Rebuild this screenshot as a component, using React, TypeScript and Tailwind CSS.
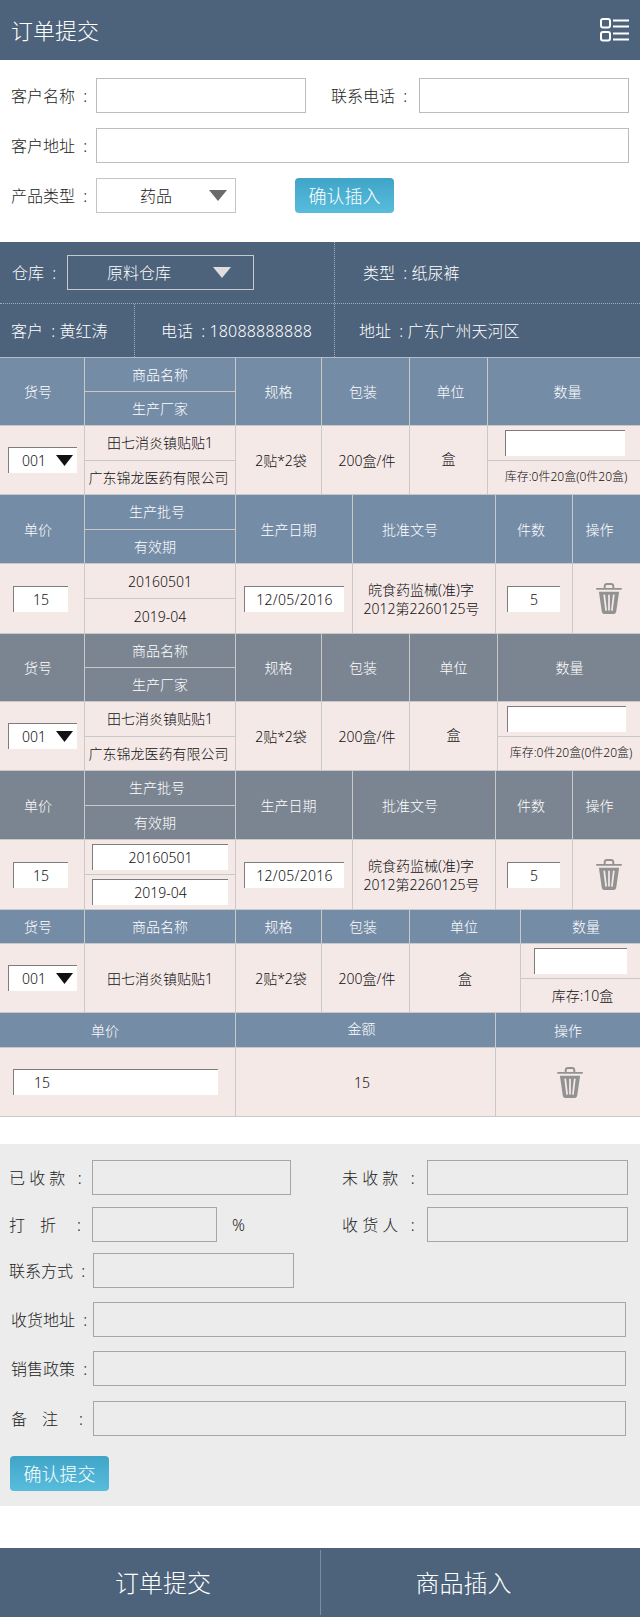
import React from "react";

function Tri({ color, w = 18, h = 11 }: { color: string; w?: number; h?: number }) {
  return (
    <svg width={w} height={h} viewBox="0 0 18 11" preserveAspectRatio="none" className="shrink-0">
      <polygon points="0,0 18,0 9,11" fill={color} />
    </svg>
  );
}

function MenuIcon() {
  return (
    <svg width="29" height="24" viewBox="0 0 29 24" fill="none" stroke="#fff" strokeWidth="2" className="shrink-0">
      <rect x="1" y="1" width="9" height="8.5" rx="2" />
      <rect x="1" y="14" width="9" height="8.5" rx="2" />
      <path d="M13 2.5H29M13 8.5H29M13 15.5H29M13 21.5H29" />
    </svg>
  );
}

function Trash() {
  return (
    <svg width="26" height="31" viewBox="0 0 27 32" className="shrink-0">
      <path d="M9 6V3.5C9 2 10 1 11.5 1H15.5C17 1 18 2 18 3.5V6" fill="none" stroke="#929292" strokeWidth="2" />
      <rect x="0" y="5" width="27" height="2" rx="1" fill="#929292" />
      <path d="M3 9H24L21 29.5C20.8 31 19.8 32 18.5 32H8.5C7.2 32 6.2 31 6 29.5Z" fill="#929292" />
      <path d="M8.5 12L10.5 28.5M13.5 12V28.5M18.5 12L16.5 28.5" stroke="#f5e9e8" strokeWidth="1.8" fill="none" />
    </svg>
  );
}

function Inset({ className = "", value = "", align = "text-center" }: { className?: string; value?: string; align?: string }) {
  return (
    <input
      readOnly
      value={value}
      className={`h-[26px] bg-white border-t border-l border-[#7d7d7d] outline-none text-[14px] text-[#111] ${align} ${className}`}
    />
  );
}

function Sel() {
  return (
    <div className="w-[69px] h-[26px] bg-white border-t border-l border-[#7d7d7d] flex items-center pl-[13px] text-[14px] text-[#111]">
      <span className="w-[34px]">001</span>
      <Tri color="#111" w={17} h={11} />
    </div>
  );
}

function Cell({ children, className = "" }: { children?: React.ReactNode; className?: string }) {
  return <div className={`flex items-center justify-center border-r border-[#c9c9c9] last:border-r-0 whitespace-nowrap ${className}`}>{children}</div>;
}

function Stack({ top, bottom, className = "" }: { top: React.ReactNode; bottom: React.ReactNode; className?: string }) {
  return (
    <div className={`flex flex-col border-r border-[#c9c9c9] last:border-r-0 whitespace-nowrap ${className}`}>
      <div className="flex-1 flex items-center justify-center border-b border-[#c9c9c9]">{top}</div>
      <div className="flex-1 flex items-center justify-center">{bottom}</div>
    </div>
  );
}

const headCommon = "text-white text-[14px] border-b border-[#c9c9c9]";
const bodyCommon = "bg-[#f5e9e8] text-[#111] text-[14px] border-b border-[#c9c9c9]";

function Approval() {
  return (
    <Cell className="flex-col leading-[19px] pr-[6px]">
      <span>皖食药监械(准)字</span>
      <span className="pl-[1px]">2012第2260125号</span>
    </Cell>
  );
}

function ProductGroup({ head, qtyCols, editableBatch, unitPad, countPad, qtyInput }: { head: string; qtyCols: string; editableBatch?: boolean; unitPad: string; countPad: string; qtyInput: string }) {
  return (
    <>
      <div className={`grid ${qtyCols} h-[68px] ${head} ${headCommon}`}>
        <Cell className="pr-[8px]">货号</Cell>
        <Stack top="商品名称" bottom="生产厂家" />
        <Cell>规格</Cell>
        <Cell className="pr-[5px]">包装</Cell>
        <Cell className={unitPad}>单位</Cell>
        <Cell className={countPad}>数量</Cell>
      </div>
      <div className={`grid ${qtyCols} h-[69px] ${bodyCommon}`}>
        <Cell className="justify-start pl-[8px]"><Sel /></Cell>
        <Stack top="田七消炎镇贴贴1" bottom={<span className="pr-[3px]">广东锦龙医药有限公司</span>} />
        <Cell className="pl-[5px]">2贴*2袋</Cell>
        <Cell className="pl-[3px]">200盒/件</Cell>
        <Cell><span className="pb-[3px]">盒</span></Cell>
        <Stack
          top={<Inset className={qtyInput} />}
          bottom={<span className="text-[12px] pl-[4px]">库存:0件20盒(0件20盒)</span>}
        />
      </div>
      <div className={`grid grid-cols-[85px_151px_117px_143px_77px_1fr] h-[69px] ${head} ${headCommon}`}>
        <Cell className="pr-[8px]">单价</Cell>
        <Stack top={<span className="pr-[6px]">生产批号</span>} bottom={<span className="pr-[10px]">有效期</span>} />
        <Cell className="pr-[11px]">生产日期</Cell>
        <Cell className="pr-[28px]">批准文号</Cell>
        <Cell className="pr-[6px]">件数</Cell>
        <Cell className="pr-[14px]">操作</Cell>
      </div>
      <div className={`grid grid-cols-[85px_151px_117px_143px_77px_1fr] h-[70px] ${bodyCommon}`}>
        <Cell className="justify-start pl-[13px]"><Inset value="15" className="w-[55px]" /></Cell>
        {editableBatch ? (
          <Stack
            top={<Inset value="20160501" className="w-[136px]" />}
            bottom={<Inset value="2019-04" className="w-[136px]" />}
          />
        ) : (
          <Stack top="20160501" bottom="2019-04" />
        )}
        <Cell className="justify-start pl-[8px]"><Inset value="12/05/2016" className="w-[100px] tracking-[0.3px]" /></Cell>
        <Approval />
        <Cell className="justify-start pl-[11px]"><Inset value="5" className="w-[53px]" /></Cell>
        <Cell className="pl-[5px]"><Trash /></Cell>
      </div>
    </>
  );
}

function FormInput({ className = "" }: { className?: string }) {
  return <input readOnly className={`h-[35px] border border-[#a6a6a6] bg-transparent outline-none shrink-0 ${className}`} />;
}

function TopInput({ className = "" }: { className?: string }) {
  return <input readOnly className={`h-[35px] border border-[#bcbcbc] bg-white outline-none shrink-0 ${className}`} />;
}

function BlueButton({ label, className = "" }: { label: string; className?: string }) {
  return (
    <button className={`w-[99px] h-[35px] rounded-[4px] bg-gradient-to-b from-[#3fa4c6] to-[#58bddd] text-white text-[18px] leading-none shrink-0 ${className}`}>
      {label}
    </button>
  );
}

function SpacedLabel({ a, b, className = "" }: { a: string; b: string; className?: string }) {
  return (
    <span className={`flex items-center ${className}`}>
      <span className="w-[31px]">{a}</span>
      <span className="w-[37px]">{b}</span>
      <span>:</span>
    </span>
  );
}

export default function App() {
  return (
    <div className="w-[640px] h-[1617px] bg-white flex flex-col whitespace-pre font-['Noto_Sans','Noto_Sans_CJK_SC',sans-serif] font-light">
      <header className="h-[60px] bg-[#4d627b] flex items-center justify-between pl-[11px] pr-[11px] text-white text-[22px] shrink-0">
        <span>订单提交</span>
        <MenuIcon />
      </header>

      <section className="h-[182px] pt-[18px] px-[11px] flex flex-col gap-[15px] text-[16px] text-[#222] shrink-0">
        <div className="flex items-center">
          <span className="w-[85px]">客户名称  :</span>
          <TopInput className="w-[210px]" />
          <span className="ml-[25px] w-[88px]">联系电话  :</span>
          <TopInput className="w-[210px]" />
        </div>
        <div className="flex items-center">
          <span className="w-[85px]">客户地址  :</span>
          <TopInput className="w-[533px]" />
        </div>
        <div className="flex items-center">
          <span className="w-[85px]">产品类型  :</span>
          <div className="w-[140px] h-[35px] border border-[#c4c4c4] flex items-center pl-[43px] pr-[8px] justify-between shrink-0">
            <span>药品</span>
            <Tri color="#6a6a6a" />
          </div>
          <BlueButton label="确认插入" className="ml-[59px]" />
        </div>
      </section>

      <section className="bg-[#4d627b] text-white text-[16px] shrink-0">
        <div className="flex h-[62px] border-b border-dotted border-[#9fadbd]">
          <div className="w-[335px] flex items-center pl-[12px] border-r border-dotted border-[#9fadbd]">
            <span className="w-[55px]">仓库  :</span>
            <div className="w-[187px] h-[35px] border border-[#c4c9d0] flex items-center pl-[39px] pr-[22px] justify-between">
              <span>原料仓库</span>
              <Tri color="#dedede" />
            </div>
          </div>
          <div className="flex-1 flex items-center pl-[28px]">类型  : 纸尿裤</div>
        </div>
        <div className="flex h-[54px] border-b border-[#b5bdc7]">
          <div className="w-[135px] flex items-center pl-[11px] border-r border-dotted border-[#9fadbd]">客户  : 黄红涛</div>
          <div className="w-[200px] flex items-center pl-[26px] border-r border-dotted border-[#9fadbd]">
            <span>电话  : </span>
            <span className="tracking-[0.2px]">18088888888</span>
          </div>
          <div className="flex-1 flex items-center pl-[24px]">地址  : 广东广州天河区</div>
        </div>
      </section>

      <section className="shrink-0">
        <ProductGroup
          head="bg-[#758ca7]"
          qtyCols="grid-cols-[85px_151px_86px_88px_78px_1fr]"
          unitPad="pl-[4px]"
          countPad="pl-[7px]"
          qtyInput="w-[120px] ml-[2px]"
        />
        <ProductGroup
          head="bg-[#7b8591]"
          qtyCols="grid-cols-[85px_151px_86px_88px_88px_1fr]"
          editableBatch
          unitPad="pl-[0px]"
          countPad="pl-[1px]"
          qtyInput="w-[119px] mr-[5px]"
        />

        <div className={`grid grid-cols-[85px_151px_86px_88px_111px_1fr] h-[34px] bg-[#758ca7] ${headCommon}`}>
          <Cell className="pr-[8px]">货号</Cell>
          <Cell>商品名称</Cell>
          <Cell>规格</Cell>
          <Cell className="pr-[5px]">包装</Cell>
          <Cell className="pr-[2px]">单位</Cell>
          <Cell className="pl-[11px]">数量</Cell>
        </div>
        <div className={`grid grid-cols-[85px_151px_86px_88px_111px_1fr] h-[69px] ${bodyCommon}`}>
          <Cell className="justify-start pl-[8px]"><Sel /></Cell>
          <Cell>田七消炎镇贴贴1</Cell>
          <Cell className="pl-[5px]">2贴*2袋</Cell>
          <Cell className="pl-[3px]">200盒/件</Cell>
          <Cell>盒</Cell>
          <Stack top={<Inset className="w-[93px]" />} bottom={<span className="pl-[4px]">库存:10盒</span>} />
        </div>
        <div className={`grid grid-cols-[236px_260px_1fr] h-[35px] bg-[#758ca7] ${headCommon}`}>
          <Cell className="pr-[25px]">单价</Cell>
          <Cell className="pr-[8px] pb-[3px]">金额</Cell>
          <Cell>操作</Cell>
        </div>
        <div className={`grid grid-cols-[236px_260px_1fr] h-[69px] ${bodyCommon}`}>
          <Cell className="justify-start pl-[13px]"><Inset value="15" align="text-left" className="w-[205px] pl-[20px]" /></Cell>
          <Cell className="pr-[7px]">15</Cell>
          <Cell className="pl-[4px]"><Trash /></Cell>
        </div>
      </section>

      <section className="mt-[27px] h-[362px] bg-[#ececec] pt-[16px] pl-[9px] text-[16px] text-[#222] shrink-0 flex flex-col">
        <div className="flex items-center">
          <div className="w-[333px] flex items-center shrink-0">
            <span className="w-[83px]">已 收 款   :</span>
            <FormInput className="w-[199px]" />
          </div>
          <span className="w-[85px]">未 收 款   :</span>
          <FormInput className="w-[201px]" />
        </div>
        <div className="flex items-center mt-[12px]">
          <div className="w-[333px] flex items-center shrink-0">
            <SpacedLabel a="打" b="折" className="w-[83px]" />
            <FormInput className="w-[125px]" />
            <span className="ml-[15px]">%</span>
          </div>
          <span className="w-[85px]">收 货 人   :</span>
          <FormInput className="w-[201px]" />
        </div>
        <div className="flex items-center mt-[11px]">
          <span className="w-[84px]">联系方式  :</span>
          <FormInput className="w-[201px]" />
        </div>
        <div className="flex items-center mt-[14px]">
          <span className="w-[84px] pl-[2px]">收货地址  :</span>
          <FormInput className="w-[533px]" />
        </div>
        <div className="flex items-center mt-[14px]">
          <span className="w-[84px] pl-[2px]">销售政策  :</span>
          <FormInput className="w-[533px]" />
        </div>
        <div className="flex items-center mt-[15px]">
          <SpacedLabel a="备" b="注" className="w-[84px] pl-[2px]" />
          <FormInput className="w-[533px]" />
        </div>
        <BlueButton label="确认提交" className="mt-[20px] ml-[1px]" />
      </section>

      <footer className="mt-[42px] h-[69px] bg-[#4d627b] text-white text-[24px] flex items-center shrink-0">
        <div className="w-[321px] h-[65px] pl-[6px] flex items-center justify-center border-r border-[#7e8ea2]">订单提交</div>
        <div className="flex-1 pr-[34px] flex items-center justify-center">商品插入</div>
      </footer>
    </div>
  );
}
